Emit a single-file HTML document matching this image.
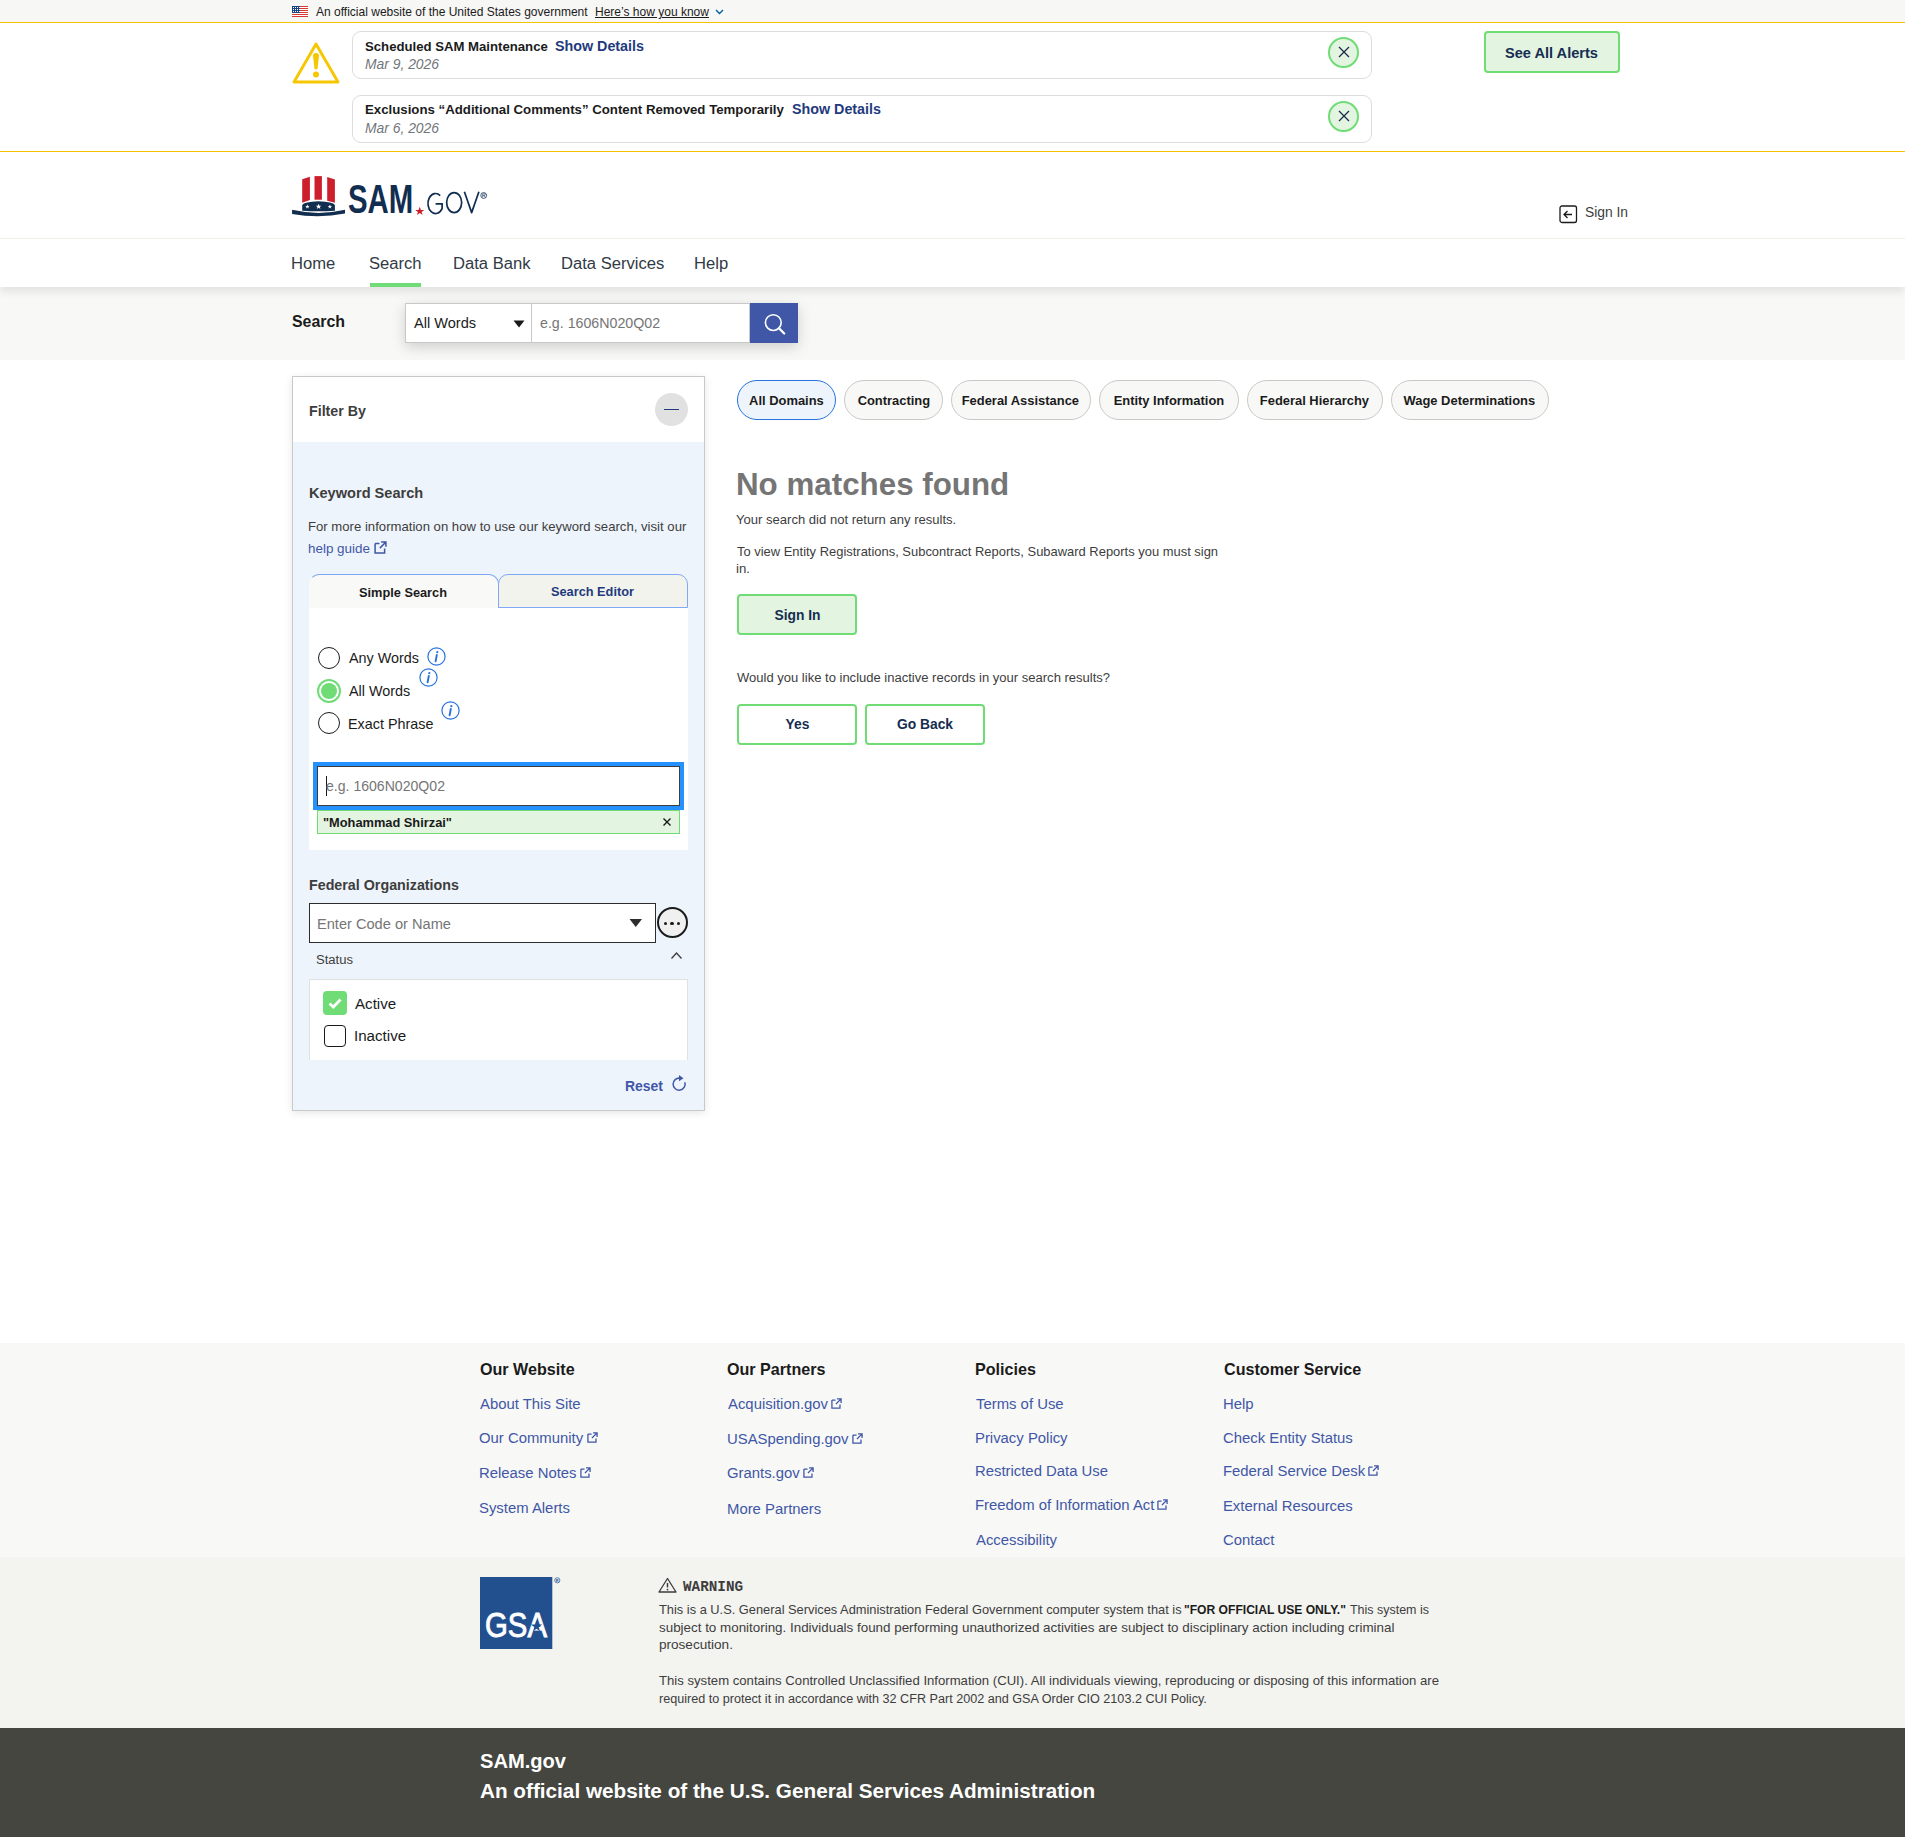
<!DOCTYPE html>
<html><head><meta charset="utf-8"><title>Search | SAM.gov</title>
<style>html,body{margin:0;padding:0;background:#fff;width:1905px;height:1837px;overflow:hidden;position:relative;font-family:"Liberation Sans",sans-serif}</style>
</head><body>
<div style="position:absolute;left:0px;top:0px;width:1905px;height:22px;background:#f7f7f5"></div>
<div style="position:absolute;left:0px;top:22px;width:1905px;height:1px;background:#f5c400"></div>
<div style="position:absolute;left:0px;top:151px;width:1905px;height:1px;background:#f5c400"></div>
<div style="position:absolute;left:0px;top:238px;width:1905px;height:1px;background:#efefea"></div>
<div style="position:absolute;left:0px;top:287px;width:1905px;height:73px;background:#f8f8f6"></div>
<div style="position:absolute;left:0px;top:281px;width:1905px;height:6px;background:#fff;box-shadow:0 3px 10px rgba(0,0,0,0.15);"></div>
<div style="position:absolute;left:0px;top:239px;width:1905px;height:48px;background:#fff"></div>
<div style="position:absolute;left:370px;top:283px;width:51px;height:4px;background:#6fdc76"></div>
<div style="position:absolute;left:0px;top:1343px;width:1905px;height:214px;background:#f8f8f6"></div>
<div style="position:absolute;left:0px;top:1557px;width:1905px;height:171px;background:#f3f3ef"></div>
<div style="position:absolute;left:0px;top:1728px;width:1905px;height:109px;background:#45463f"></div>
<svg style="position:absolute;left:292px;top:6px;" width="16" height="11" viewBox="0 0 16 11"><rect width="16" height="11" fill="#fff"/><rect y="0" width="16" height="1" fill="#d83933"/><rect y="2" width="16" height="1" fill="#d83933"/><rect y="4" width="16" height="1" fill="#d83933"/><rect y="6" width="16" height="1" fill="#d83933"/><rect y="8" width="16" height="1" fill="#d83933"/><rect y="10" width="16" height="1" fill="#d83933"/><rect width="8" height="7" fill="#1a4480"/><rect x="1" y="1" width="1" height="1" fill="#fff"/><rect x="1" y="3" width="1" height="1" fill="#fff"/><rect x="1" y="5" width="1" height="1" fill="#fff"/><rect x="3" y="1" width="1" height="1" fill="#fff"/><rect x="3" y="3" width="1" height="1" fill="#fff"/><rect x="3" y="5" width="1" height="1" fill="#fff"/><rect x="5" y="1" width="1" height="1" fill="#fff"/><rect x="5" y="3" width="1" height="1" fill="#fff"/><rect x="5" y="5" width="1" height="1" fill="#fff"/><rect x="7" y="1" width="1" height="1" fill="#fff"/><rect x="7" y="3" width="1" height="1" fill="#fff"/><rect x="7" y="5" width="1" height="1" fill="#fff"/></svg>
<svg style="position:absolute;left:715px;top:9px;" width="9" height="6" viewBox="0 0 9 6"><path d="M1 1 L4.5 4.5 L8 1" fill="none" stroke="#005ea2" stroke-width="1.4"/></svg>
<svg style="position:absolute;left:290px;top:40px;" width="52" height="46" viewBox="0 0 52 46"><path d="M26 4 L48 42 L4 42 Z" fill="none" stroke="#f6c700" stroke-width="2.9" stroke-linejoin="round"/><path d="M23 15.5 Q23 13 26 13 Q29 13 29 15.5 L27.6 28 Q27.4 29.5 26 29.5 Q24.6 29.5 24.4 28 Z" fill="#f6c700"/><circle cx="26" cy="34.6" r="3" fill="#f6c700"/></svg>
<div style="position:absolute;left:352px;top:31px;width:1020px;height:48px;box-sizing:border-box;border:1px solid #dcdcdc;border-radius:9px;background:#fff"></div>
<div style="position:absolute;left:1328px;top:37px;width:31px;height:31px;box-sizing:border-box;border:2px solid #6fdc76;border-radius:50%;background:#e3f4e1"></div>
<svg style="position:absolute;left:1337px;top:45px;" width="14" height="14" viewBox="0 0 14 14"><path d="M2 2 L12 12 M12 2 L2 12" stroke="#1b2a4a" stroke-width="1.3"/></svg>
<div style="position:absolute;left:352px;top:95px;width:1020px;height:48px;box-sizing:border-box;border:1px solid #dcdcdc;border-radius:9px;background:#fff"></div>
<div style="position:absolute;left:1328px;top:101px;width:31px;height:31px;box-sizing:border-box;border:2px solid #6fdc76;border-radius:50%;background:#e3f4e1"></div>
<svg style="position:absolute;left:1337px;top:109px;" width="14" height="14" viewBox="0 0 14 14"><path d="M2 2 L12 12 M12 2 L2 12" stroke="#1b2a4a" stroke-width="1.3"/></svg>
<div style="position:absolute;left:1484px;top:31px;width:136px;height:42px;box-sizing:border-box;border:2px solid #6fdc76;border-radius:4px;background:#e3f4e1"></div>
<svg style="position:absolute;left:292px;top:176px;" width="54" height="42" viewBox="0 0 54 42">
<path d="M10.2 3.2 L17.9 0.7 L17.9 23.9 L10.2 26.7 Z" fill="#cd1f2b"/>
<path d="M22.5 0.1 L29.9 0.1 L29.9 23.7 L22.5 23.7 Z" fill="#cd1f2b"/>
<path d="M35.2 1.0 L42.9 3.4 L42.9 26.7 L35.2 24.7 Z" fill="#cd1f2b"/>
<path d="M10.2 29 Q12 26 26.5 25.3 Q41 26 42.9 29 L42.9 34.7 Q26.5 36 10.2 34.7 Z" fill="#112e51"/>
<path d="M0.1 33.8 Q26.5 40 53 33.8 L53 37.6 Q26.5 42.5 0.1 37.9 Z" fill="#112e51"/>
<polygon points="15.4,28.4 16.0,30.0 17.6,30.0 16.3,31.0 16.8,32.6 15.4,31.6 14.0,32.6 14.5,31.0 13.2,30.0 14.8,30.0" fill="#fff"/>
<polygon points="26.6,27.8 27.4,29.8 29.4,29.8 27.8,31.0 28.4,33.0 26.6,31.8 24.8,33.0 25.4,31.0 23.8,29.8 25.8,29.8" fill="#fff"/>
<polygon points="37.9,28.4 38.5,30.0 40.1,30.0 38.8,31.0 39.3,32.6 37.9,31.6 36.5,32.6 37.0,31.0 35.7,30.0 37.3,30.0" fill="#fff"/>
</svg>
<svg style="position:absolute;left:340px;top:180px;" width="150" height="40" viewBox="0 0 150 40"><text x="7.9" y="33" font-family="Liberation Sans" font-weight="700" font-size="40" textLength="65.3" lengthAdjust="spacingAndGlyphs" fill="#112e51">SAM</text><polygon points="79.75,26.7 80.9,29.9 84.3,29.9 81.6,31.9 82.6,35.0 79.75,33.1 76.9,35.0 77.9,31.9 75.2,29.9 78.6,29.9" fill="#cd1f2b"/><path d="M100.2 15.6 A7.6 10 0 1 0 102.1 28.6 L102.1 23.9 L95.6 23.9" fill="none" stroke="#112e51" stroke-width="1.7"/><ellipse cx="114.15" cy="22.6" rx="7.5" ry="9.95" fill="none" stroke="#112e51" stroke-width="1.7"/><path d="M124.4 11.8 L131.65 32.6 L138.9 11.8" fill="none" stroke="#112e51" stroke-width="1.7" stroke-linejoin="round"/><circle cx="143.7" cy="15.5" r="2.9" fill="none" stroke="#112e51" stroke-width="0.8"/><path d="M142.7 17.2 L142.7 13.8 L144.2 13.8 Q145.3 13.8 145.3 14.7 Q145.3 15.6 144.2 15.6 L142.7 15.6 M144 15.6 L145.2 17.2" fill="none" stroke="#112e51" stroke-width="0.6"/></svg>
<svg style="position:absolute;left:1559px;top:205px;" width="19" height="19" viewBox="0 0 19 19"><rect x="1" y="1" width="16.5" height="16.5" rx="2" fill="none" stroke="#1b1b1b" stroke-width="1.3"/><path d="M13 9.5 L5 9.5 M8.5 6 L5 9.5 L8.5 13" fill="none" stroke="#1b1b1b" stroke-width="1.3"/></svg>
<div style="position:absolute;left:405px;top:303px;width:393px;height:40px;box-shadow:0 4px 14px rgba(0,0,0,0.17)"></div>
<div style="position:absolute;left:405px;top:303px;width:127px;height:40px;box-sizing:border-box;border:1px solid #c8c8c8;background:#fff"></div>
<div style="position:absolute;left:532px;top:303px;width:218px;height:40px;box-sizing:border-box;border:1px solid #c8c8c8;border-left:none;background:#fff"></div>
<svg style="position:absolute;left:513px;top:320px;" width="12" height="8" viewBox="0 0 12 8"><polygon points="0.5,0.5 11.5,0.5 6,7.5" fill="#1b1b1b"/></svg>
<div style="position:absolute;left:750px;top:303px;width:48px;height:40px;background:#3f57a6"></div>
<svg style="position:absolute;left:761px;top:310px;" width="26" height="26" viewBox="0 0 26 26"><circle cx="12.3" cy="12.6" r="7.9" fill="none" stroke="#fff" stroke-width="1.6"/><path d="M18 18.3 L23.2 23.5" stroke="#fff" stroke-width="2.3" stroke-linecap="round"/></svg>
<div style="position:absolute;left:292px;top:376px;width:413px;height:735px;box-sizing:border-box;border:1px solid #c9c9c9;background:#eef4fb;box-shadow:0 2px 8px rgba(0,0,0,0.10)"></div>
<div style="position:absolute;left:293px;top:377px;width:411px;height:65px;background:#fff"></div>
<div style="position:absolute;left:655px;top:393px;width:33px;height:33px;border-radius:50%;background:#e1e1e1"></div>
<div style="position:absolute;left:664px;top:408.5px;width:15px;height:1.5px;background:#1f3a7d"></div>
<div style="position:absolute;left:309px;top:574px;width:190px;height:34px;box-sizing:border-box;border:1px solid #80a9f5;border-left-color:transparent;border-bottom:none;border-radius:10px 10px 0 0;background:#f9f9f7"></div>
<div style="position:absolute;left:498px;top:574px;width:190px;height:34px;box-sizing:border-box;border:1px solid #80a9f5;border-radius:10px 10px 0 0;background:#f3f3ee"></div>
<div style="position:absolute;left:309px;top:608px;width:379px;height:242px;background:#fff"></div>
<div style="position:absolute;left:318px;top:647px;width:22px;height:22px;box-sizing:border-box;border:1.5px solid #1b1b1b;border-radius:50%"></div>
<div style="position:absolute;left:317px;top:679px;width:24px;height:24px;box-sizing:border-box;border:2.6px solid #6fdc76;border-radius:50%;background:#fff"></div>
<div style="position:absolute;left:321px;top:683px;width:16px;height:16px;border-radius:50%;background:#6fdc76"></div>
<div style="position:absolute;left:318px;top:712px;width:22px;height:22px;box-sizing:border-box;border:1.5px solid #1b1b1b;border-radius:50%"></div>
<svg style="position:absolute;left:426.5px;top:646.5px;" width="19" height="19" viewBox="0 0 19 19"><circle cx="9.5" cy="9.5" r="8.6" fill="none" stroke="#2672de" stroke-width="1.2"/><circle cx="10.3" cy="5.2" r="1.1" fill="#2672de"/><path d="M9.8 8 L8.6 14.3" stroke="#2672de" stroke-width="1.9" stroke-linecap="round"/></svg>
<svg style="position:absolute;left:418.5px;top:667.5px;" width="19" height="19" viewBox="0 0 19 19"><circle cx="9.5" cy="9.5" r="8.6" fill="none" stroke="#2672de" stroke-width="1.2"/><circle cx="10.3" cy="5.2" r="1.1" fill="#2672de"/><path d="M9.8 8 L8.6 14.3" stroke="#2672de" stroke-width="1.9" stroke-linecap="round"/></svg>
<svg style="position:absolute;left:440.5px;top:700.5px;" width="19" height="19" viewBox="0 0 19 19"><circle cx="9.5" cy="9.5" r="8.6" fill="none" stroke="#2672de" stroke-width="1.2"/><circle cx="10.3" cy="5.2" r="1.1" fill="#2672de"/><path d="M9.8 8 L8.6 14.3" stroke="#2672de" stroke-width="1.9" stroke-linecap="round"/></svg>
<div style="position:absolute;left:313px;top:762px;width:371px;height:48px;background:#2491ff"></div>
<div style="position:absolute;left:317px;top:766px;width:363px;height:40px;box-sizing:border-box;border:1px solid #3d3d3d;background:#fff"></div>
<div style="position:absolute;left:326px;top:776px;width:1px;height:20px;background:#1b1b1b"></div>
<div style="position:absolute;left:317px;top:810px;width:363px;height:24px;box-sizing:border-box;border:1px solid #6fdc76;background:#e3f4e1"></div>
<svg style="position:absolute;left:662px;top:817px;" width="10" height="10" viewBox="0 0 10 10"><path d="M1.5 1.5 L8.5 8.5 M8.5 1.5 L1.5 8.5" stroke="#1b1b1b" stroke-width="1.4"/></svg>
<div style="position:absolute;left:309px;top:903px;width:347px;height:40px;box-sizing:border-box;border:1px solid #2d2d2d;background:#fff"></div>
<svg style="position:absolute;left:629px;top:918px;" width="14" height="10" viewBox="0 0 14 10"><polygon points="0.5,1 13,1 6.75,9" fill="#2d2d2d"/></svg>
<div style="position:absolute;left:657px;top:907px;width:31px;height:31px;box-sizing:border-box;border:2px solid #1b1b1b;border-radius:50%;background:#f0f0f0"></div>
<div style="position:absolute;left:663.6px;top:921.6px;width:3.8px;height:3.8px;border-radius:50%;background:#1b1b1b"></div>
<div style="position:absolute;left:670.1px;top:921.6px;width:3.8px;height:3.8px;border-radius:50%;background:#1b1b1b"></div>
<div style="position:absolute;left:676.6px;top:921.6px;width:3.8px;height:3.8px;border-radius:50%;background:#1b1b1b"></div>
<svg style="position:absolute;left:670px;top:951px;" width="13" height="9" viewBox="0 0 13 9"><path d="M1.5 7.5 L6.5 2 L11.5 7.5" fill="none" stroke="#3d3d3d" stroke-width="1.3"/></svg>
<div style="position:absolute;left:309px;top:979px;width:379px;height:81px;box-sizing:border-box;border:1px solid #dfe1e2;border-bottom:none;background:#fff"></div>
<div style="position:absolute;left:323px;top:991px;width:24px;height:24px;border-radius:4px;background:#6fdc76"></div>
<svg style="position:absolute;left:323px;top:991px;" width="24" height="24" viewBox="0 0 24 24"><path d="M6.5 12.5 L10.3 16 L17.5 8.5" fill="none" stroke="#fff" stroke-width="2.8"/></svg>
<div style="position:absolute;left:324px;top:1025px;width:22px;height:22px;box-sizing:border-box;border:1.6px solid #1b1b1b;border-radius:4px;background:#fff"></div>
<svg style="position:absolute;left:671px;top:1074px;" width="18" height="19" viewBox="0 0 18 19"><path d="M13.8 8.2 A6 6 0 1 1 9 4.2" fill="none" stroke="#3f57a6" stroke-width="1.5"/><polygon points="8,1 12.5,4.3 8,7.2" fill="#3f57a6"/></svg>
<div style="position:absolute;left:737px;top:380px;width:99px;height:40px;box-sizing:border-box;border:1.5px solid #2672de;background:#eef4fb;border-radius:20px"></div>
<div style="position:absolute;left:844px;top:380px;width:99px;height:40px;box-sizing:border-box;border:1px solid #c9c9c9;background:#f8f8f6;border-radius:20px"></div>
<div style="position:absolute;left:951px;top:380px;width:140px;height:40px;box-sizing:border-box;border:1px solid #c9c9c9;background:#f8f8f6;border-radius:20px"></div>
<div style="position:absolute;left:1099px;top:380px;width:140px;height:40px;box-sizing:border-box;border:1px solid #c9c9c9;background:#f8f8f6;border-radius:20px"></div>
<div style="position:absolute;left:1247px;top:380px;width:136px;height:40px;box-sizing:border-box;border:1px solid #c9c9c9;background:#f8f8f6;border-radius:20px"></div>
<div style="position:absolute;left:1391px;top:380px;width:158px;height:40px;box-sizing:border-box;border:1px solid #c9c9c9;background:#f8f8f6;border-radius:20px"></div>
<div style="position:absolute;left:737px;top:594px;width:120px;height:41px;box-sizing:border-box;border:2px solid #6fdc76;border-radius:4px;background:#e3f4e1"></div>
<div style="position:absolute;left:737px;top:704px;width:120px;height:41px;box-sizing:border-box;border:2px solid #6fdc76;border-radius:4px;background:#fff"></div>
<div style="position:absolute;left:865px;top:704px;width:120px;height:41px;box-sizing:border-box;border:2px solid #6fdc76;border-radius:4px;background:#fff"></div>
<svg style="position:absolute;left:480px;top:1576px;" width="86" height="74" viewBox="0 0 86 74"><rect x="0" y="1" width="72.3" height="72" fill="#22508f"/><text x="5" y="61.4" font-family="Liberation Sans" font-weight="400" font-size="34.5" textLength="62" lengthAdjust="spacingAndGlyphs" fill="#fff" stroke="#fff" stroke-width="0.9">GSA</text><polygon points="56.5,44.5 57.9,48.6 62.2,48.6 58.7,51.1 60.0,55.2 56.5,52.7 53.0,55.2 54.3,51.1 50.8,48.6 55.1,48.6" fill="#22508f"/><circle cx="77.3" cy="4.3" r="2.6" fill="none" stroke="#22508f" stroke-width="0.7"/><text x="77.3" y="5.9" font-family="Liberation Sans" font-size="4" font-weight="700" text-anchor="middle" fill="#22508f">R</text></svg>
<svg style="position:absolute;left:658px;top:1577px;" width="19" height="16" viewBox="0 0 19 16"><path d="M9.5 1.5 L18 15 L1 15 Z" fill="none" stroke="#3d3d3d" stroke-width="1.3" stroke-linejoin="round"/><path d="M9.5 6 L9.5 10.5" stroke="#3d3d3d" stroke-width="1.5"/><circle cx="9.5" cy="12.6" r="0.9" fill="#3d3d3d"/></svg>
<div id="gb1" class="t" style="position:absolute;left:316.00px;top:6.03px;font-family:'Liberation Sans',sans-serif;font-weight:400;font-size:12.03px;line-height:1;white-space:nowrap;color:#1b1b1b;">An official website of the United States government</div>
<div id="gb2" class="t" style="position:absolute;left:594.99px;top:6.03px;font-family:'Liberation Sans',sans-serif;font-weight:400;font-size:12.02px;line-height:1;white-space:nowrap;color:#1b1b1b;text-decoration:underline;">Here’s how you know</div>
<div id="al1" class="t" style="position:absolute;left:365.00px;top:40.05px;font-family:'Liberation Sans',sans-serif;font-weight:700;font-size:13.17px;line-height:1;white-space:nowrap;color:#1b1b1b;">Scheduled SAM Maintenance</div>
<div id="al1l" class="t" style="position:absolute;left:554.99px;top:39.03px;font-family:'Liberation Sans',sans-serif;font-weight:700;font-size:14.31px;line-height:1;white-space:nowrap;color:#1f3a7d;">Show Details</div>
<div id="al1d" class="t" style="position:absolute;left:364.98px;top:57.86px;font-family:'Liberation Sans',sans-serif;font-weight:400;font-size:13.88px;line-height:1;white-space:nowrap;color:#71767a;font-style:italic;">Mar 9, 2026</div>
<div id="al2" class="t" style="position:absolute;left:365.00px;top:103.03px;font-family:'Liberation Sans',sans-serif;font-weight:700;font-size:13.24px;line-height:1;white-space:nowrap;color:#1b1b1b;">Exclusions “Additional Comments” Content Removed Temporarily</div>
<div id="al2l" class="t" style="position:absolute;left:791.99px;top:102.02px;font-family:'Liberation Sans',sans-serif;font-weight:700;font-size:14.31px;line-height:1;white-space:nowrap;color:#1f3a7d;">Show Details</div>
<div id="al2d" class="t" style="position:absolute;left:364.98px;top:121.86px;font-family:'Liberation Sans',sans-serif;font-weight:400;font-size:13.88px;line-height:1;white-space:nowrap;color:#71767a;font-style:italic;">Mar 6, 2026</div>
<div id="seeall" class="t" style="position:absolute;left:1504.99px;top:46.16px;font-family:'Liberation Sans',sans-serif;font-weight:700;font-size:14.60px;line-height:1;white-space:nowrap;color:#162e51;">See All Alerts</div>
<div id="signin" class="t" style="position:absolute;left:1584.96px;top:206.17px;font-family:'Liberation Sans',sans-serif;font-weight:400;font-size:13.83px;line-height:1;white-space:nowrap;color:#3d3d3d;">Sign In</div>
<div id="nav1" class="t" style="position:absolute;left:290.97px;top:256.03px;font-family:'Liberation Sans',sans-serif;font-weight:400;font-size:16.61px;line-height:1;white-space:nowrap;color:#323a45;">Home</div>
<div id="nav2" class="t" style="position:absolute;left:368.94px;top:256.03px;font-family:'Liberation Sans',sans-serif;font-weight:400;font-size:16.61px;line-height:1;white-space:nowrap;color:#323a45;">Search</div>
<div id="nav3" class="t" style="position:absolute;left:452.98px;top:256.03px;font-family:'Liberation Sans',sans-serif;font-weight:400;font-size:16.61px;line-height:1;white-space:nowrap;color:#323a45;">Data Bank</div>
<div id="nav4" class="t" style="position:absolute;left:560.94px;top:256.03px;font-family:'Liberation Sans',sans-serif;font-weight:400;font-size:16.61px;line-height:1;white-space:nowrap;color:#323a45;">Data Services</div>
<div id="nav5" class="t" style="position:absolute;left:693.99px;top:256.03px;font-family:'Liberation Sans',sans-serif;font-weight:400;font-size:16.61px;line-height:1;white-space:nowrap;color:#323a45;">Help</div>
<div id="sb1" class="t" style="position:absolute;left:292.00px;top:314.23px;font-family:'Liberation Sans',sans-serif;font-weight:700;font-size:15.91px;line-height:1;white-space:nowrap;color:#1b1b1b;">Search</div>
<div id="sb2" class="t" style="position:absolute;left:413.98px;top:315.91px;font-family:'Liberation Sans',sans-serif;font-weight:400;font-size:14.57px;line-height:1;white-space:nowrap;color:#1b1b1b;">All Words</div>
<div id="sb3" class="t" style="position:absolute;left:539.98px;top:316.04px;font-family:'Liberation Sans',sans-serif;font-weight:400;font-size:14.22px;line-height:1;white-space:nowrap;color:#757575;">e.g. 1606N020Q02</div>
<div id="fp1" class="t" style="position:absolute;left:308.99px;top:403.98px;font-family:'Liberation Sans',sans-serif;font-weight:700;font-size:14.26px;line-height:1;white-space:nowrap;color:#3d3d3d;">Filter By</div>
<div id="fp2" class="t" style="position:absolute;left:308.97px;top:486.03px;font-family:'Liberation Sans',sans-serif;font-weight:700;font-size:14.58px;line-height:1;white-space:nowrap;color:#3d3d3d;">Keyword Search</div>
<div id="fp3" class="t" style="position:absolute;left:308.00px;top:520.02px;font-family:'Liberation Sans',sans-serif;font-weight:400;font-size:13.15px;line-height:1;white-space:nowrap;color:#3d3d3d;">For more information on how to use our keyword search, visit our</div>
<div id="fp4" class="t" style="position:absolute;left:307.98px;top:542.03px;font-family:'Liberation Sans',sans-serif;font-weight:400;font-size:13.44px;line-height:1;white-space:nowrap;color:#3f57a6;">help guide<svg style="position:absolute;left:100%;margin-left:4px;top:-1.03px" width="13" height="13" viewBox="0 0 12 12"><path d="M1 2.2 L1 11 L9.8 11 L9.8 7 M5 2.2 L1 2.2 M6.6 1 L11 1 L11 5.4 M11 1 L5.4 6.6" fill="none" stroke="#3f57a6" stroke-width="1.4"/></svg></div>
<div id="tab1" class="t" style="position:absolute;left:359.01px;top:586.98px;font-family:'Liberation Sans',sans-serif;font-weight:700;font-size:12.78px;line-height:1;white-space:nowrap;color:#1b1b1b;">Simple Search</div>
<div id="tab2" class="t" style="position:absolute;left:550.99px;top:586.02px;font-family:'Liberation Sans',sans-serif;font-weight:700;font-size:12.77px;line-height:1;white-space:nowrap;color:#1f3a7d;">Search Editor</div>
<div id="r1" class="t" style="position:absolute;left:349.00px;top:651.03px;font-family:'Liberation Sans',sans-serif;font-weight:400;font-size:14.37px;line-height:1;white-space:nowrap;color:#1b1b1b;">Any Words</div>
<div id="r2" class="t" style="position:absolute;left:349.00px;top:684.02px;font-family:'Liberation Sans',sans-serif;font-weight:400;font-size:14.37px;line-height:1;white-space:nowrap;color:#1b1b1b;">All Words</div>
<div id="r3" class="t" style="position:absolute;left:347.99px;top:717.03px;font-family:'Liberation Sans',sans-serif;font-weight:400;font-size:14.37px;line-height:1;white-space:nowrap;color:#1b1b1b;">Exact Phrase</div>
<div id="kin" class="t" style="position:absolute;left:325.99px;top:779.02px;font-family:'Liberation Sans',sans-serif;font-weight:400;font-size:14.08px;line-height:1;white-space:nowrap;color:#757575;">e.g. 1606N020Q02</div>
<div id="tag" class="t" style="position:absolute;left:322.99px;top:817.06px;font-family:'Liberation Sans',sans-serif;font-weight:700;font-size:12.82px;line-height:1;white-space:nowrap;color:#1b1b1b;">"Mohammad Shirzai"</div>
<div id="fo1" class="t" style="position:absolute;left:308.98px;top:878.02px;font-family:'Liberation Sans',sans-serif;font-weight:700;font-size:14.29px;line-height:1;white-space:nowrap;color:#3d3d3d;">Federal Organizations</div>
<div id="fo2" class="t" style="position:absolute;left:316.96px;top:916.99px;font-family:'Liberation Sans',sans-serif;font-weight:400;font-size:14.62px;line-height:1;white-space:nowrap;color:#757575;">Enter Code or Name</div>
<div id="st1" class="t" style="position:absolute;left:315.97px;top:953.03px;font-family:'Liberation Sans',sans-serif;font-weight:400;font-size:13.06px;line-height:1;white-space:nowrap;color:#3d3d3d;">Status</div>
<div id="cb1" class="t" style="position:absolute;left:354.98px;top:995.96px;font-family:'Liberation Sans',sans-serif;font-weight:400;font-size:15.17px;line-height:1;white-space:nowrap;color:#1b1b1b;">Active</div>
<div id="cb2" class="t" style="position:absolute;left:353.94px;top:1027.96px;font-family:'Liberation Sans',sans-serif;font-weight:400;font-size:15.17px;line-height:1;white-space:nowrap;color:#1b1b1b;">Inactive</div>
<div id="reset" class="t" style="position:absolute;left:624.98px;top:1079.93px;font-family:'Liberation Sans',sans-serif;font-weight:700;font-size:13.96px;line-height:1;white-space:nowrap;color:#3f57a6;">Reset</div>
<div id="ch1" class="t" style="position:absolute;left:749.07px;top:395.06px;font-family:'Liberation Sans',sans-serif;font-weight:700;font-size:12.93px;line-height:1;white-space:nowrap;color:#1b1b1b;">All Domains</div>
<div id="ch2" class="t" style="position:absolute;left:857.65px;top:395.05px;font-family:'Liberation Sans',sans-serif;font-weight:700;font-size:12.93px;line-height:1;white-space:nowrap;color:#1b1b1b;">Contracting</div>
<div id="ch3" class="t" style="position:absolute;left:961.71px;top:395.06px;font-family:'Liberation Sans',sans-serif;font-weight:700;font-size:12.93px;line-height:1;white-space:nowrap;color:#1b1b1b;">Federal Assistance</div>
<div id="ch4" class="t" style="position:absolute;left:1113.64px;top:395.05px;font-family:'Liberation Sans',sans-serif;font-weight:700;font-size:12.93px;line-height:1;white-space:nowrap;color:#1b1b1b;">Entity Information</div>
<div id="ch5" class="t" style="position:absolute;left:1259.80px;top:395.05px;font-family:'Liberation Sans',sans-serif;font-weight:700;font-size:12.93px;line-height:1;white-space:nowrap;color:#1b1b1b;">Federal Hierarchy</div>
<div id="ch6" class="t" style="position:absolute;left:1403.56px;top:395.06px;font-family:'Liberation Sans',sans-serif;font-weight:700;font-size:12.93px;line-height:1;white-space:nowrap;color:#1b1b1b;">Wage Determinations</div>
<div id="nm1" class="t" style="position:absolute;left:735.98px;top:469.08px;font-family:'Liberation Sans',sans-serif;font-weight:700;font-size:31.33px;line-height:1;white-space:nowrap;color:#757575;">No matches found</div>
<div id="nm2" class="t" style="position:absolute;left:735.99px;top:513.07px;font-family:'Liberation Sans',sans-serif;font-weight:400;font-size:13.07px;line-height:1;white-space:nowrap;color:#3d3d3d;">Your search did not return any results.</div>
<div id="nm3" class="t" style="position:absolute;left:737.00px;top:546.02px;font-family:'Liberation Sans',sans-serif;font-weight:400;font-size:12.95px;line-height:1;white-space:nowrap;color:#3d3d3d;">To view Entity Registrations, Subcontract Reports, Subaward Reports you must sign</div>
<div id="nm4" class="t" style="position:absolute;left:736.00px;top:562.03px;font-family:'Liberation Sans',sans-serif;font-weight:400;font-size:13.20px;line-height:1;white-space:nowrap;color:#3d3d3d;">in.</div>
<div id="btn1" class="t" style="position:absolute;left:774.47px;top:609.26px;font-family:'Liberation Sans',sans-serif;font-weight:700;font-size:13.84px;line-height:1;white-space:nowrap;color:#162e51;">Sign In</div>
<div id="nm5" class="t" style="position:absolute;left:737.00px;top:670.99px;font-family:'Liberation Sans',sans-serif;font-weight:400;font-size:13.02px;line-height:1;white-space:nowrap;color:#3d3d3d;">Would you like to include inactive records in your search results?</div>
<div id="btn2" class="t" style="position:absolute;left:785.61px;top:718.26px;font-family:'Liberation Sans',sans-serif;font-weight:700;font-size:13.84px;line-height:1;white-space:nowrap;color:#162e51;">Yes</div>
<div id="btn3" class="t" style="position:absolute;left:896.96px;top:718.26px;font-family:'Liberation Sans',sans-serif;font-weight:700;font-size:13.84px;line-height:1;white-space:nowrap;color:#162e51;">Go Back</div>
<div id="fh1" class="t" style="position:absolute;left:479.97px;top:1360.93px;font-family:'Liberation Sans',sans-serif;font-weight:700;font-size:16.14px;line-height:1;white-space:nowrap;color:#1b1b1b;">Our Website</div>
<div id="fh2" class="t" style="position:absolute;left:726.98px;top:1360.93px;font-family:'Liberation Sans',sans-serif;font-weight:700;font-size:16.14px;line-height:1;white-space:nowrap;color:#1b1b1b;">Our Partners</div>
<div id="fh3" class="t" style="position:absolute;left:974.97px;top:1360.94px;font-family:'Liberation Sans',sans-serif;font-weight:700;font-size:16.14px;line-height:1;white-space:nowrap;color:#1b1b1b;">Policies</div>
<div id="fh4" class="t" style="position:absolute;left:1224.00px;top:1360.94px;font-family:'Liberation Sans',sans-serif;font-weight:700;font-size:16.14px;line-height:1;white-space:nowrap;color:#1b1b1b;">Customer Service</div>
<div id="f11" class="t" style="position:absolute;left:480.00px;top:1397.03px;font-family:'Liberation Sans',sans-serif;font-weight:400;font-size:14.88px;line-height:1;white-space:nowrap;color:#3f57a6;">About This Site</div>
<div id="f12" class="t" style="position:absolute;left:479.02px;top:1431.03px;font-family:'Liberation Sans',sans-serif;font-weight:400;font-size:14.88px;line-height:1;white-space:nowrap;color:#3f57a6;">Our Community<svg style="position:absolute;left:100%;margin-left:4px;top:0.97px" width="11" height="11" viewBox="0 0 12 12"><path d="M1 2.2 L1 11 L9.8 11 L9.8 7 M5 2.2 L1 2.2 M6.6 1 L11 1 L11 5.4 M11 1 L5.4 6.6" fill="none" stroke="#3f57a6" stroke-width="1.4"/></svg></div>
<div id="f13" class="t" style="position:absolute;left:478.95px;top:1466.03px;font-family:'Liberation Sans',sans-serif;font-weight:400;font-size:14.88px;line-height:1;white-space:nowrap;color:#3f57a6;">Release Notes<svg style="position:absolute;left:100%;margin-left:3px;top:0.57px" width="11" height="11" viewBox="0 0 12 12"><path d="M1 2.2 L1 11 L9.8 11 L9.8 7 M5 2.2 L1 2.2 M6.6 1 L11 1 L11 5.4 M11 1 L5.4 6.6" fill="none" stroke="#3f57a6" stroke-width="1.4"/></svg></div>
<div id="f14" class="t" style="position:absolute;left:478.99px;top:1501.02px;font-family:'Liberation Sans',sans-serif;font-weight:400;font-size:14.88px;line-height:1;white-space:nowrap;color:#3f57a6;">System Alerts</div>
<div id="f21" class="t" style="position:absolute;left:728.00px;top:1397.03px;font-family:'Liberation Sans',sans-serif;font-weight:400;font-size:14.88px;line-height:1;white-space:nowrap;color:#3f57a6;">Acquisition.gov<svg style="position:absolute;left:100%;margin-left:3px;top:0.97px" width="11" height="11" viewBox="0 0 12 12"><path d="M1 2.2 L1 11 L9.8 11 L9.8 7 M5 2.2 L1 2.2 M6.6 1 L11 1 L11 5.4 M11 1 L5.4 6.6" fill="none" stroke="#3f57a6" stroke-width="1.4"/></svg></div>
<div id="f22" class="t" style="position:absolute;left:726.98px;top:1432.03px;font-family:'Liberation Sans',sans-serif;font-weight:400;font-size:14.88px;line-height:1;white-space:nowrap;color:#3f57a6;">USASpending.gov<svg style="position:absolute;left:100%;margin-left:3px;top:0.97px" width="11" height="11" viewBox="0 0 12 12"><path d="M1 2.2 L1 11 L9.8 11 L9.8 7 M5 2.2 L1 2.2 M6.6 1 L11 1 L11 5.4 M11 1 L5.4 6.6" fill="none" stroke="#3f57a6" stroke-width="1.4"/></svg></div>
<div id="f23" class="t" style="position:absolute;left:726.99px;top:1466.02px;font-family:'Liberation Sans',sans-serif;font-weight:400;font-size:14.88px;line-height:1;white-space:nowrap;color:#3f57a6;">Grants.gov<svg style="position:absolute;left:100%;margin-left:3px;top:1.48px" width="11" height="11" viewBox="0 0 12 12"><path d="M1 2.2 L1 11 L9.8 11 L9.8 7 M5 2.2 L1 2.2 M6.6 1 L11 1 L11 5.4 M11 1 L5.4 6.6" fill="none" stroke="#3f57a6" stroke-width="1.4"/></svg></div>
<div id="f24" class="t" style="position:absolute;left:726.99px;top:1502.03px;font-family:'Liberation Sans',sans-serif;font-weight:400;font-size:14.88px;line-height:1;white-space:nowrap;color:#3f57a6;">More Partners</div>
<div id="f31" class="t" style="position:absolute;left:976.00px;top:1397.02px;font-family:'Liberation Sans',sans-serif;font-weight:400;font-size:14.88px;line-height:1;white-space:nowrap;color:#3f57a6;">Terms of Use</div>
<div id="f32" class="t" style="position:absolute;left:974.99px;top:1431.03px;font-family:'Liberation Sans',sans-serif;font-weight:400;font-size:14.88px;line-height:1;white-space:nowrap;color:#3f57a6;">Privacy Policy</div>
<div id="f33" class="t" style="position:absolute;left:974.96px;top:1464.03px;font-family:'Liberation Sans',sans-serif;font-weight:400;font-size:14.88px;line-height:1;white-space:nowrap;color:#3f57a6;">Restricted Data Use</div>
<div id="f34" class="t" style="position:absolute;left:975.01px;top:1498.02px;font-family:'Liberation Sans',sans-serif;font-weight:400;font-size:14.88px;line-height:1;white-space:nowrap;color:#3f57a6;">Freedom of Information Act<svg style="position:absolute;left:100%;margin-left:3px;top:0.98px" width="11" height="11" viewBox="0 0 12 12"><path d="M1 2.2 L1 11 L9.8 11 L9.8 7 M5 2.2 L1 2.2 M6.6 1 L11 1 L11 5.4 M11 1 L5.4 6.6" fill="none" stroke="#3f57a6" stroke-width="1.4"/></svg></div>
<div id="f35" class="t" style="position:absolute;left:976.00px;top:1533.03px;font-family:'Liberation Sans',sans-serif;font-weight:400;font-size:14.88px;line-height:1;white-space:nowrap;color:#3f57a6;">Accessibility</div>
<div id="f41" class="t" style="position:absolute;left:1223.01px;top:1397.02px;font-family:'Liberation Sans',sans-serif;font-weight:400;font-size:14.88px;line-height:1;white-space:nowrap;color:#3f57a6;">Help</div>
<div id="f42" class="t" style="position:absolute;left:1223.00px;top:1431.03px;font-family:'Liberation Sans',sans-serif;font-weight:400;font-size:14.88px;line-height:1;white-space:nowrap;color:#3f57a6;">Check Entity Status</div>
<div id="f43" class="t" style="position:absolute;left:1222.96px;top:1464.03px;font-family:'Liberation Sans',sans-serif;font-weight:400;font-size:14.88px;line-height:1;white-space:nowrap;color:#3f57a6;">Federal Service Desk<svg style="position:absolute;left:100%;margin-left:3px;top:0.97px" width="11" height="11" viewBox="0 0 12 12"><path d="M1 2.2 L1 11 L9.8 11 L9.8 7 M5 2.2 L1 2.2 M6.6 1 L11 1 L11 5.4 M11 1 L5.4 6.6" fill="none" stroke="#3f57a6" stroke-width="1.4"/></svg></div>
<div id="f44" class="t" style="position:absolute;left:1222.96px;top:1499.02px;font-family:'Liberation Sans',sans-serif;font-weight:400;font-size:14.88px;line-height:1;white-space:nowrap;color:#3f57a6;">External Resources</div>
<div id="f45" class="t" style="position:absolute;left:1223.01px;top:1533.03px;font-family:'Liberation Sans',sans-serif;font-weight:400;font-size:14.88px;line-height:1;white-space:nowrap;color:#3f57a6;">Contact</div>
<div id="w0" class="t" style="position:absolute;left:683.00px;top:1579.90px;font-family:'Liberation Mono',monospace;font-weight:700;font-size:14.30px;line-height:1;white-space:nowrap;color:#3d3d3d;">WARNING</div>
<div id="w1a" class="t" style="position:absolute;left:659.00px;top:1604.02px;font-family:'Liberation Sans',sans-serif;font-weight:400;font-size:12.83px;line-height:1;white-space:nowrap;color:#3d3d3d;">This is a U.S. General Services Administration Federal Government computer system that is</div>
<div id="w1b" class="t" style="position:absolute;left:1183.97px;top:1604.08px;font-family:'Liberation Sans',sans-serif;font-weight:700;font-size:12.10px;line-height:1;white-space:nowrap;color:#1b1b1b;">"FOR OFFICIAL USE ONLY."</div>
<div id="w1c" class="t" style="position:absolute;left:1350.00px;top:1604.03px;font-family:'Liberation Sans',sans-serif;font-weight:400;font-size:12.47px;line-height:1;white-space:nowrap;color:#3d3d3d;">This system is</div>
<div id="w2" class="t" style="position:absolute;left:659.00px;top:1621.03px;font-family:'Liberation Sans',sans-serif;font-weight:400;font-size:13.40px;line-height:1;white-space:nowrap;color:#3d3d3d;">subject to monitoring. Individuals found performing unauthorized activities are subject to disciplinary action including criminal</div>
<div id="w3" class="t" style="position:absolute;left:658.95px;top:1638.10px;font-family:'Liberation Sans',sans-serif;font-weight:400;font-size:13.59px;line-height:1;white-space:nowrap;color:#3d3d3d;">prosecution.</div>
<div id="w4" class="t" style="position:absolute;left:659.00px;top:1674.00px;font-family:'Liberation Sans',sans-serif;font-weight:400;font-size:13.15px;line-height:1;white-space:nowrap;color:#3d3d3d;">This system contains Controlled Unclassified Information (CUI). All individuals viewing, reproducing or disposing of this information are</div>
<div id="w5" class="t" style="position:absolute;left:659.00px;top:1693.03px;font-family:'Liberation Sans',sans-serif;font-weight:400;font-size:12.62px;line-height:1;white-space:nowrap;color:#3d3d3d;">required to protect it in accordance with 32 CFR Part 2002 and GSA Order CIO 2103.2 CUI Policy.</div>
<div id="df1" class="t" style="position:absolute;left:479.97px;top:1750.84px;font-family:'Liberation Sans',sans-serif;font-weight:700;font-size:20.13px;line-height:1;white-space:nowrap;color:#ffffff;">SAM.gov</div>
<div id="df2" class="t" style="position:absolute;left:480.00px;top:1781.02px;font-family:'Liberation Sans',sans-serif;font-weight:700;font-size:20.72px;line-height:1;white-space:nowrap;color:#ffffff;">An official website of the U.S. General Services Administration</div>
</body></html>
